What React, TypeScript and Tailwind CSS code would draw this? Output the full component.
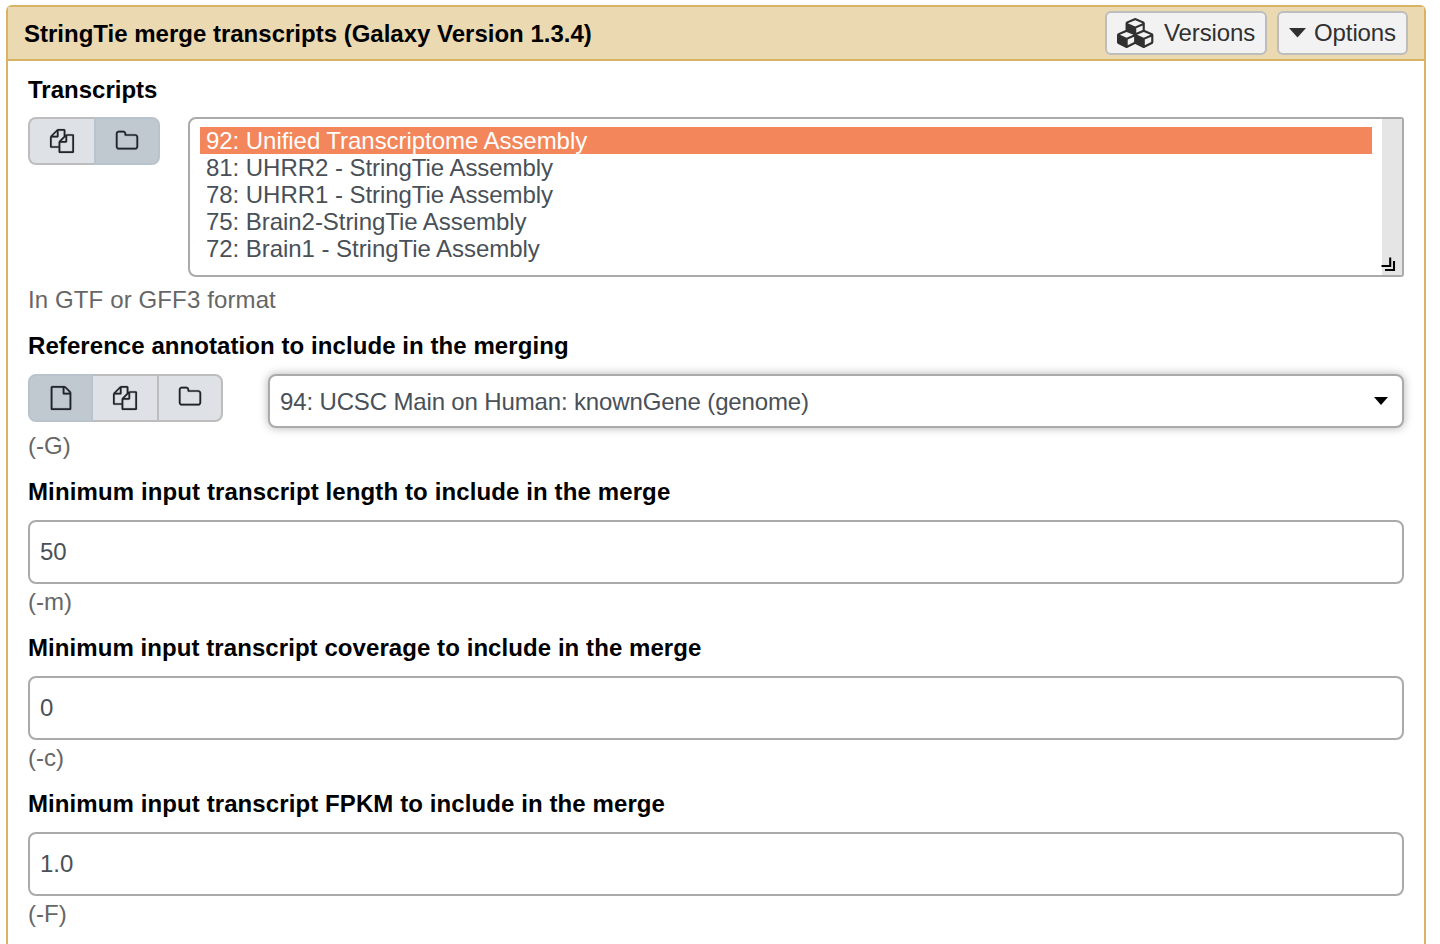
import React from "react";

function Icon({ d, className, viewBox = "0 0 1792 1792" }: { d: string; className: string; viewBox?: string }) {
  return (
    <svg viewBox={viewBox} className={`shrink-0 overflow-visible fill-current ${className}`} aria-hidden="true">
      <path d={d} />
    </svg>
  );
}

function Glyph({ d, className = "" }: { d: string; className?: string }) {
  return (
    <svg
      viewBox="0 0 1792 1792"
      className={`h-6 w-6 shrink-0 overflow-visible fill-current stroke-current ${className}`}
      strokeWidth="14"
      strokeLinejoin="miter"
      aria-hidden="true"
    >
      <path d={d} />
    </svg>
  );
}

const FILE =
  "M1596 380q28 28 48 76t20 88v1152q0 40-28 68t-68 28h-1344q-40 0-68-28t-28-68v-1600q0-40 28-68t68-28h896q40 0 88 20t76 48zm-444-244v376h376q-10-29-22-41l-313-313q-12-12-41-22zm384 1528v-1024h-416q-40 0-68-28t-28-68v-416h-768v1536h1280z";
const FILES =
  "M1696 384q40 0 68 28t28 68v1216q0 40-28 68t-68 28h-960q-40 0-68-28t-28-68v-288h-544q-40 0-68-28t-28-68v-672q0-40 20-88t48-76l408-408q28-28 76-48t88-20h416q40 0 68 28t28 68v328q68-40 128-40h416zm-544 213l-299 299h299v-299zm-640-384l-299 299h299v-299zm196 647l316-316v-416h-384v416q0 40-28 68t-68 28h-416v640h512v-256q0-40 20-88t48-76zm956 804v-1152h-384v416q0 40-28 68t-68 28h-416v640h896z";
const FOLDER =
  "M1600 1312v-704q0-40-28-68t-68-28h-704q-40 0-68-28t-28-68v-64q0-40-28-68t-68-28h-320q-40 0-68 28t-28 68v960q0 40 28 68t68 28h1216q40 0 68-28t28-68zm128-704v704q0 92-66 158t-158 66h-1216q-92 0-158-66t-66-158v-960q0-92 66-158t158-66h320q92 0 158 66t66 158v32h672q92 0 158 66t66 158z";
const CUBES =
  "M640 1632l384-192v-314l-384 164v342zm-64-454l404-173-404-173-404 173zm1088 454l384-192v-314l-384 164v342zm-64-454l404-173-404-173-404 173zm-448-293l384-165v-266l-384 164v267zm-64-379l441-189-441-189-441 189zm1088 518v416q0 36-19 67t-52 47l-448 224q-25 14-57 14t-57-14l-448-224q-4-2-7-4-2 2-7 4l-448 224q-25 14-57 14t-57-14l-448-224q-33-16-52-47t-19-67v-416q0-38 21.500-70t56.500-48l434-186v-400q0-38 21.500-70t56.500-48l448-192q23-10 50-10t50 10l448 192q35 16 56.500 48t21.500 70v400l434 186q36 16 57 48t21 70z";

const datasets = [
  "92: Unified Transcriptome Assembly",
  "81: UHRR2 - StringTie Assembly",
  "78: UHRR1 - StringTie Assembly",
  "75: Brain2-StringTie Assembly",
  "72: Brain1 - StringTie Assembly",
];

const parameters = [
  {
    label: "Minimum input transcript length to include in the merge",
    value: "50",
    help: "(-m)",
    tracking: "tracking-[0.115px]",
  },
  {
    label: "Minimum input transcript coverage to include in the merge",
    value: "0",
    help: "(-c)",
    tracking: "tracking-[0.07px]",
  },
  {
    label: "Minimum input transcript FPKM to include in the merge",
    value: "1.0",
    help: "(-F)",
    tracking: "tracking-[0.095px]",
  },
];

function Label({ children, className = "" }: { children: React.ReactNode; className?: string }) {
  return <div className={`h-[30px] font-bold leading-[30px] text-black ${className}`}>{children}</div>;
}

function Help({ children, className = "" }: { children: React.ReactNode; className?: string }) {
  return <div className={`h-[30px] leading-[30px] text-[#666666] ${className}`}>{children}</div>;
}

export default function App() {
  return (
    <div className="h-[944px] overflow-hidden bg-white pl-[6px] pr-[14px] pt-[5px] font-['Liberation_Sans',Arial,sans-serif] text-2xl text-[#495057]">
      <div className="h-[1000px] rounded-t-md border-2 border-[#d8b365]">
        <header className="flex h-[54px] items-center justify-between border-b-2 border-[#d8b365] bg-[#ebd9b2] pl-4 pr-4">
          <h1 className="pt-[2px] font-bold text-black">StringTie merge transcripts (Galaxy Version 1.3.4)</h1>
          <div className="flex gap-[10px] text-[#303030]">
            <button className="flex h-11 w-[162px] items-center rounded-md border-2 border-[#bdbdbd] bg-[#f2f2f2] pl-[10px]">
              <Icon d={CUBES} viewBox="0 0 2304 1792" className="mb-[1px] mr-[8.500px] h-[30px] w-[38.500px]" />
              <span className="leading-[40px] tracking-[-0.12px]">Versions</span>
            </button>
            <button className="flex h-11 w-[131px] items-center rounded-md border-2 border-[#bdbdbd] bg-[#f2f2f2] pl-[10px]">
              <Icon d="M0 0H17L8.5 9.500Z" viewBox="0 0 17 10" className="mr-2 h-[10px] w-[17px]" />
              <span className="leading-[40px] tracking-[-0.1px]">Options</span>
            </button>
          </div>
        </header>

        <main className="px-5 pt-[14px]">
          <section>
            <Label>Transcripts</Label>
            <div className="mt-3 flex">
              <div className="flex h-12 w-[132px] text-[#212529]">
                <button className="flex w-[66px] items-center justify-center rounded-l-lg border-2 border-r-0 border-[#bdbdbd] bg-[#dee2e6]">
                  <Glyph d={FILES} />
                </button>
                <button className="flex w-[66px] items-center justify-center rounded-r-lg border-2 border-[#b9c3cd] bg-[#c1c9d0]">
                  <Glyph d={FOLDER} />
                </button>
              </div>
              <div className="ml-7 flex h-40 flex-1 overflow-hidden rounded-l-lg rounded-r-[3px] border-2 border-[#aaaaaa]">
                <ul className="flex-1 px-[10px] pt-2">
                  {datasets.map((name, i) => (
                    <li
                      key={name}
                      className={`h-[27px] pl-[6px] leading-[27px] tracking-[-0.05px] ${i === 0 ? "bg-[#f3865b] text-white" : ""}`}
                    >
                      {name}
                    </li>
                  ))}
                </ul>
                <div className="relative w-5 bg-[#e5e5e5]">
                  <svg
                    viewBox="0 0 14 14"
                    className="absolute -left-px bottom-[4px] h-[14px] w-[14px] overflow-visible"
                    fill="none"
                    stroke="#000"
                    strokeWidth="2.1"
                  >
                    <path d="M0.500 9H9.200V0.500M4 13H13V4" />
                  </svg>
                </div>
              </div>
            </div>
            <div className="mt-2">
              <Help className="tracking-[0.12px]">In GTF or GFF3 format</Help>
            </div>
          </section>

          <section className="mt-4">
            <Label className="tracking-[0.07px]">Reference annotation to include in the merging</Label>
            <div className="mt-[13px] flex">
              <div className="flex h-12 w-[195px] text-[#212529]">
                <button className="flex w-[65px] items-center justify-center rounded-l-lg border-2 border-[#b9c3cd] bg-[#c1c9d0] pb-[1px]">
                  <Glyph d={FILE} />
                </button>
                <button className="flex w-[64px] items-center justify-center border-y-2 border-[#bdbdbd] bg-[#dee2e6] pb-[1px]">
                  <Glyph d={FILES} />
                </button>
                <button className="flex w-[66px] items-center justify-center rounded-r-lg border-2 border-[#bdbdbd] bg-[#dee2e6] pb-[2px]">
                  <Glyph d={FOLDER} />
                </button>
              </div>
              <div className="ml-[45px] flex h-[54px] flex-1 items-center justify-between rounded-lg border-2 border-[#aaaaaa] bg-white pl-[10px] pr-[14px] shadow-[0_0_10px_rgba(0,0,0,0.3)]">
                <span className="pt-[2px] tracking-[-0.145px]">94: UCSC Main on Human: knownGene (genome)</span>
                <Icon d="M0 0H14L7 8Z" viewBox="0 0 14 8" className="h-2 w-[14px] text-black" />
              </div>
            </div>
            <div className="mt-[3px]">
              <Help>(-G)</Help>
            </div>
          </section>

          {parameters.map((p) => (
            <section key={p.label} className="mt-4">
              <Label className={p.tracking}>{p.label}</Label>
              <input
                defaultValue={p.value}
                aria-label={p.label}
                className="mt-[13px] block h-16 w-full rounded-lg border-2 border-[#aaaaaa] bg-white px-[10px] text-[#495057]"
              />
              <div className="mt-[3px]">
                <Help>{p.help}</Help>
              </div>
            </section>
          ))}
        </main>
      </div>
    </div>
  );
}
